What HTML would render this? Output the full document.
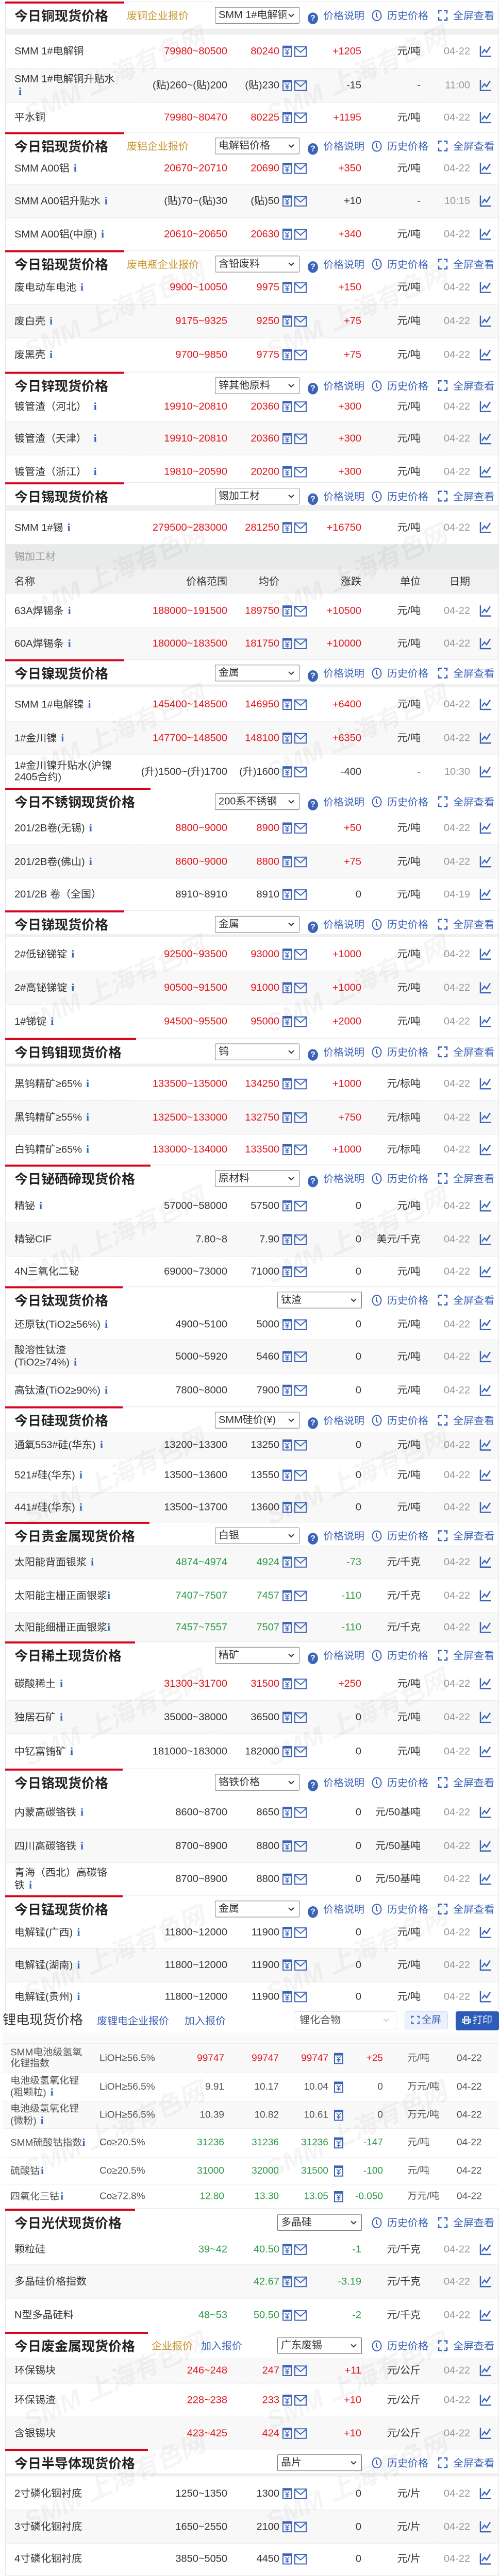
<!DOCTYPE html>
<html><head><meta charset="utf-8">
<style>
*{box-sizing:border-box}
html,body{margin:0;padding:0;background:#fff}
body{font-family:"Liberation Sans","Noto Sans CJK SC",sans-serif;color:#333}
#o{position:relative;width:970px;height:5127px;overflow:hidden}
#w{position:relative;width:970px;height:5127px;overflow:hidden}
.c{position:absolute;left:10px;width:958px;border:1px solid #e6e6e6;background:#fff}
.bar{position:absolute;left:-1px;top:-1px;height:4px;background:#d9001b;z-index:5}
.h{position:absolute;z-index:5;white-space:nowrap}
.tt{left:17px;top:11px;font-size:26px;font-weight:bold;color:#222;line-height:34px}
.sb{top:15px;font-size:20px;color:#c8952c;line-height:26px}
.sb.bl{color:#3b63b8}
.sl{left:406px;top:10px;width:164px;height:33px;border:1px solid #777;border-radius:2px;font-size:20px;line-height:31px;padding-left:6px;background:#fff}
.sl.rt{left:527px}
.sl span{display:block;width:132px;overflow:hidden;white-space:nowrap}
.sl svg{position:absolute;right:8px;top:11px;width:14px;height:10px}
.lk{top:15px;font-size:20px;line-height:26px;color:#3b63b8}
.lk .q{display:inline-block;width:20px;height:23px;border-radius:50%;background:#3b63b8;color:#fff;font-size:16px;font-weight:bold;text-align:center;line-height:23px;margin-right:10px;vertical-align:-3px}
.lk svg{width:20px;height:23px;margin-right:10px;vertical-align:-4px}
.band{position:absolute;left:11px;width:956px;background:#f0f0f0}
.r{position:absolute;left:11px;width:956px;height:67px;font-size:20px;color:#333}
.r.g{background:#f8f8f8}
.r.b{border-top:1px dashed #dcdcdc}
.r>*{position:absolute;top:50%;transform:translateY(-50%);white-space:nowrap;line-height:24px}
.r .n{left:17px;width:196px;white-space:normal;color:#333}
.r .p{right:526px}.r .a{right:425px}
.r .ic{left:537px;width:48px;height:24px}
.r .d{right:266px}.r .u{right:151px}.r .t{right:55px;color:#999}
.r .ch{left:919px;width:24px;height:24px}
.R .p,.R .a,.R .d{color:#e5141b}
.G .p,.G .a,.G .d{color:#2e9b48}
i.i{font-family:"Liberation Serif",serif;font-weight:bold;font-style:normal;color:#3b63b8;font-size:22px;margin-left:8px}
.wm{position:absolute;font-size:50px;font-weight:bold;font-style:italic;color:rgba(0,0,0,0.04);transform:rotate(-25deg);white-space:nowrap;z-index:4;pointer-events:none}
.lr{position:absolute;left:5px;width:963px;font-size:19px;color:#555;border-bottom:1px solid #eee}
.lr.g{background:#f9f9f9}
.lr>*{position:absolute;top:50%;transform:translateY(-50%);white-space:nowrap;line-height:24px}
.lr .n{left:15px;width:150px;white-space:normal}
.lr .s{left:188px}.lr .l{right:533px}.lr .hh{right:427px}.lr .a{right:331px}
.lr .ic{left:643px;width:18px;height:24px}
.lr .d{right:225px}.lr .u{left:785px}.lr .t{left:881px}
.lr.R .l,.lr.R .hh,.lr.R .a,.lr.R .d{color:#e5141b}
.lr.G .l,.lr.G .hh,.lr.G .a,.lr.G .d{color:#2e9b48}
</style></head><body>
<div id="o">
<div id="w">
<svg width="0" height="0" style="position:absolute;left:0;top:0"><defs>
<symbol id="cal" viewBox="0 0 48 24"><rect x="1" y="2" width="16" height="20" fill="none" stroke="#3b63b8" stroke-width="2"/><rect x="1" y="2" width="16" height="4" fill="#3b63b8"/><path d="M5 8l4 4 4-4M9 12v8M5.5 14h7M5.5 17h7" stroke="#3b63b8" stroke-width="1.5" fill="none"/><rect x="24" y="3" width="22" height="19" fill="none" stroke="#3b63b8" stroke-width="2"/><path d="M24 4l11 10 11-10" fill="none" stroke="#3b63b8" stroke-width="2"/></symbol>
<symbol id="c1" viewBox="0 0 18 24"><rect x="1" y="2" width="16" height="20" fill="none" stroke="#3b63b8" stroke-width="2"/><rect x="1" y="2" width="16" height="4" fill="#3b63b8"/><path d="M5 8l4 4 4-4M9 12v8M5.5 14h7M5.5 17h7" stroke="#3b63b8" stroke-width="1.5" fill="none"/></symbol>
<symbol id="ch" viewBox="0 0 24 24"><path d="M2 1v21h21" stroke="#3b63b8" stroke-width="2.5" fill="none"/><path d="M5 16l5-7 4 5 7-11" stroke="#3b63b8" stroke-width="2.5" fill="none"/></symbol>
<symbol id="ck" viewBox="0 0 20 23"><ellipse cx="10" cy="12" rx="8.5" ry="10" fill="none" stroke="#3b63b8" stroke-width="2"/><path d="M9 6v7l3 3" fill="none" stroke="#3b63b8" stroke-width="2"/></symbol>
<symbol id="fs" viewBox="0 0 20 23"><path d="M2 8V2h6M12 2h6v6M18 15v6h-6M8 21H2v-6" fill="none" stroke="#3b63b8" stroke-width="2.5"/></symbol>
<symbol id="cv" viewBox="0 0 14 10"><path d="M2 2l5 5 5-5" fill="none" stroke="#333" stroke-width="2"/></symbol>
</defs></svg>

<!-- COPPER -->
<div class="c" style="top:3px;height:261px"><i class="bar" style="width:231px"></i>
<span class="h tt">今日铜现货价格</span><span class="h sb" style="left:235px">废铜企业报价</span>
<div class="h sl"><span>SMM 1#电解铜</span><svg><use href="#cv"/></svg></div>
<span class="h lk" style="left:586px"><b class="q">?</b>价格说明</span><span class="h lk" style="left:710px"><svg><use href="#ck"/></svg>历史价格</span><span class="h lk" style="left:838px"><svg><use href="#fs"/></svg>全屏查看</span></div>
<div class="band" style="top:57px;height:12px"></div>
<div class="r R" style="top:68px"><span class="n">SMM 1#电解铜</span><span class="p">79980~80500</span><span class="a">80240</span><svg class="ic"><use href="#cal"/></svg><span class="d">+1205</span><span class="u">元/吨</span><span class="t">04-22</span><svg class="ch"><use href="#ch"/></svg></div>
<div class="r g b" style="top:136px"><span class="n">SMM 1#电解铜升贴水 <i class="i">i</i></span><span class="p">(贴)260~(贴)200</span><span class="a">(贴)230</span><svg class="ic"><use href="#cal"/></svg><span class="d">-15</span><span class="u">-</span><span class="t">11:00</span><svg class="ch"><use href="#ch"/></svg></div>
<div class="r R b" style="top:203px;height:60px"><span class="n">平水铜</span><span class="p">79980~80470</span><span class="a">80225</span><svg class="ic"><use href="#cal"/></svg><span class="d">+1195</span><span class="u">元/吨</span><span class="t">04-22</span><svg class="ch"><use href="#ch"/></svg></div>

<!-- ALUMINIUM -->
<div class="c" style="top:263px;height:236px"><i class="bar" style="width:231px"></i>
<span class="h tt">今日铝现货价格</span><span class="h sb" style="left:235px">废铝企业报价</span>
<div class="h sl"><span>电解铝价格</span><svg><use href="#cv"/></svg></div>
<span class="h lk" style="left:586px"><b class="q">?</b>价格说明</span><span class="h lk" style="left:710px"><svg><use href="#ck"/></svg>历史价格</span><span class="h lk" style="left:838px"><svg><use href="#fs"/></svg>全屏查看</span></div>
<div class="r R" style="top:305px;height:60px"><span class="n">SMM A00铝<i class="i">i</i></span><span class="p">20670~20710</span><span class="a">20690</span><svg class="ic"><use href="#cal"/></svg><span class="d">+350</span><span class="u">元/吨</span><span class="t">04-22</span><svg class="ch"><use href="#ch"/></svg></div>
<div class="r g b" style="top:366px"><span class="n">SMM A00铝升贴水<i class="i">i</i></span><span class="p">(贴)70~(贴)30</span><span class="a">(贴)50</span><svg class="ic"><use href="#cal"/></svg><span class="d">+10</span><span class="u">-</span><span class="t">10:15</span><svg class="ch"><use href="#ch"/></svg></div>
<div class="r R b" style="top:433px;height:65px"><span class="n">SMM A00铝(中原)<i class="i">i</i></span><span class="p">20610~20650</span><span class="a">20630</span><svg class="ic"><use href="#cal"/></svg><span class="d">+340</span><span class="u">元/吨</span><span class="t">04-22</span><svg class="ch"><use href="#ch"/></svg></div>

<!-- LEAD -->
<div class="c" style="top:498px;height:243px"><i class="bar" style="width:231px"></i>
<span class="h tt">今日铅现货价格</span><span class="h sb" style="left:235px">废电瓶企业报价</span>
<div class="h sl"><span>含铅废料</span><svg><use href="#cv"/></svg></div>
<span class="h lk" style="left:586px"><b class="q">?</b>价格说明</span><span class="h lk" style="left:710px"><svg><use href="#ck"/></svg>历史价格</span><span class="h lk" style="left:838px"><svg><use href="#fs"/></svg>全屏查看</span></div>
<div class="r R" style="top:538px"><span class="n">废电动车电池<i class="i">i</i></span><span class="p">9900~10050</span><span class="a">9975</span><svg class="ic"><use href="#cal"/></svg><span class="d">+150</span><span class="u">元/吨</span><span class="t">04-22</span><svg class="ch"><use href="#ch"/></svg></div>
<div class="r R g b" style="top:605px"><span class="n">废白壳<i class="i">i</i></span><span class="p">9175~9325</span><span class="a">9250</span><svg class="ic"><use href="#cal"/></svg><span class="d">+75</span><span class="u">元/吨</span><span class="t">04-22</span><svg class="ch"><use href="#ch"/></svg></div>
<div class="r R b" style="top:672px"><span class="n">废黑壳<i class="i">i</i></span><span class="p">9700~9850</span><span class="a">9775</span><svg class="ic"><use href="#cal"/></svg><span class="d">+75</span><span class="u">元/吨</span><span class="t">04-22</span><svg class="ch"><use href="#ch"/></svg></div>

<!-- ZINC -->
<div class="c" style="top:740px;height:221px"><i class="bar" style="width:231px"></i>
<span class="h tt">今日锌现货价格</span>
<div class="h sl"><span>锌其他原料</span><svg><use href="#cv"/></svg></div>
<span class="h lk" style="left:586px"><b class="q">?</b>价格说明</span><span class="h lk" style="left:710px"><svg><use href="#ck"/></svg>历史价格</span><span class="h lk" style="left:838px"><svg><use href="#fs"/></svg>全屏查看</span></div>
<div class="r R" style="top:778px;height:61px"><span class="n">镀管渣（河北） <i class="i">i</i></span><span class="p">19910~20810</span><span class="a">20360</span><svg class="ic"><use href="#cal"/></svg><span class="d">+300</span><span class="u">元/吨</span><span class="t">04-22</span><svg class="ch"><use href="#ch"/></svg></div>
<div class="r R g b" style="top:839px"><span class="n">镀管渣（天津） <i class="i">i</i></span><span class="p">19910~20810</span><span class="a">20360</span><svg class="ic"><use href="#cal"/></svg><span class="d">+300</span><span class="u">元/吨</span><span class="t">04-22</span><svg class="ch"><use href="#ch"/></svg></div>
<div class="r R b" style="top:905px"><span class="n">镀管渣（浙江） <i class="i">i</i></span><span class="p">19810~20590</span><span class="a">20200</span><svg class="ic"><use href="#cal"/></svg><span class="d">+300</span><span class="u">元/吨</span><span class="t">04-22</span><svg class="ch"><use href="#ch"/></svg></div>

<!-- TIN -->
<div class="c" style="top:960px;height:353px"><i class="bar" style="width:231px"></i>
<span class="h tt">今日锡现货价格</span>
<div class="h sl"><span>锡加工材</span><svg><use href="#cv"/></svg></div>
<span class="h lk" style="left:586px"><b class="q">?</b>价格说明</span><span class="h lk" style="left:710px"><svg><use href="#ck"/></svg>历史价格</span><span class="h lk" style="left:838px"><svg><use href="#fs"/></svg>全屏查看</span></div>
<div class="band" style="top:1005px;height:12px"></div>
<div class="r R" style="top:1017px;height:66px"><span class="n">SMM 1#锡<i class="i">i</i></span><span class="p">279500~283000</span><span class="a">281250</span><svg class="ic"><use href="#cal"/></svg><span class="d">+16750</span><span class="u">元/吨</span><span class="t">04-22</span><svg class="ch"><use href="#ch"/></svg></div>
<div class="r" style="top:1083px;height:50px;background:#e9eaea"><span class="n" style="color:#999">锡加工材</span></div>
<div class="r" style="top:1133px;height:49px;background:#f1f1f1"><span class="n">名称</span><span class="p">价格范围</span><span class="a">均价</span><span class="d">涨跌</span><span class="u">单位</span><span class="t" style="color:#333">日期</span></div>
<div class="r R" style="top:1182px"><span class="n">63A焊锡条<i class="i">i</i></span><span class="p">188000~191500</span><span class="a">189750</span><svg class="ic"><use href="#cal"/></svg><span class="d">+10500</span><span class="u">元/吨</span><span class="t">04-22</span><svg class="ch"><use href="#ch"/></svg></div>
<div class="r R g b" style="top:1249px;height:63px"><span class="n">60A焊锡条<i class="i">i</i></span><span class="p">180000~183500</span><span class="a">181750</span><svg class="ic"><use href="#cal"/></svg><span class="d">+10000</span><span class="u">元/吨</span><span class="t">04-22</span><svg class="ch"><use href="#ch"/></svg></div>

<!-- NICKEL -->
<div class="c" style="top:1312px;height:257px"><i class="bar" style="width:231px"></i>
<span class="h tt">今日镍现货价格</span>
<div class="h sl"><span>金属</span><svg><use href="#cv"/></svg></div>
<span class="h lk" style="left:586px"><b class="q">?</b>价格说明</span><span class="h lk" style="left:710px"><svg><use href="#ck"/></svg>历史价格</span><span class="h lk" style="left:838px"><svg><use href="#fs"/></svg>全屏查看</span></div>
<div class="band" style="top:1362px;height:6px"></div>
<div class="r R" style="top:1368px"><span class="n">SMM 1#电解镍<i class="i">i</i></span><span class="p">145400~148500</span><span class="a">146950</span><svg class="ic"><use href="#cal"/></svg><span class="d">+6400</span><span class="u">元/吨</span><span class="t">04-22</span><svg class="ch"><use href="#ch"/></svg></div>
<div class="r R g b" style="top:1435px"><span class="n">1#金川镍<i class="i">i</i></span><span class="p">147700~148500</span><span class="a">148100</span><svg class="ic"><use href="#cal"/></svg><span class="d">+6350</span><span class="u">元/吨</span><span class="t">04-22</span><svg class="ch"><use href="#ch"/></svg></div>
<div class="r b" style="top:1502px;height:66px"><span class="n" style="line-height:23px">1#金川镍升贴水(沪镍2405合约)</span><span class="p">(升)1500~(升)1700</span><span class="a">(升)1600</span><svg class="ic"><use href="#cal"/></svg><span class="d">-400</span><span class="u">-</span><span class="t">10:30</span><svg class="ch"><use href="#ch"/></svg></div>

<!-- STAINLESS -->
<div class="c" style="top:1568px;height:245px"><i class="bar" style="width:282px"></i>
<span class="h tt">今日不锈钢现货价格</span>
<div class="h sl"><span>200系不锈钢</span><svg><use href="#cv"/></svg></div>
<span class="h lk" style="left:586px"><b class="q">?</b>价格说明</span><span class="h lk" style="left:710px"><svg><use href="#ck"/></svg>历史价格</span><span class="h lk" style="left:838px"><svg><use href="#fs"/></svg>全屏查看</span></div>
<div class="r R" style="top:1614px"><span class="n">201/2B卷(无锡)<i class="i">i</i></span><span class="p">8800~9000</span><span class="a">8900</span><svg class="ic"><use href="#cal"/></svg><span class="d">+50</span><span class="u">元/吨</span><span class="t">04-22</span><svg class="ch"><use href="#ch"/></svg></div>
<div class="r R g b" style="top:1681px"><span class="n">201/2B卷(佛山)<i class="i">i</i></span><span class="p">8600~9000</span><span class="a">8800</span><svg class="ic"><use href="#cal"/></svg><span class="d">+75</span><span class="u">元/吨</span><span class="t">04-22</span><svg class="ch"><use href="#ch"/></svg></div>
<div class="r b" style="top:1747px;height:65px"><span class="n">201/2B 卷（全国）</span><span class="p">8910~8910</span><span class="a">8910</span><svg class="ic"><use href="#cal"/></svg><span class="d">0</span><span class="u">元/吨</span><span class="t">04-19</span><svg class="ch"><use href="#ch"/></svg></div>

<!-- ANTIMONY -->
<div class="c" style="top:1812px;height:255px"><i class="bar" style="width:231px"></i>
<span class="h tt">今日锑现货价格</span>
<div class="h sl"><span>金属</span><svg><use href="#cv"/></svg></div>
<span class="h lk" style="left:586px"><b class="q">?</b>价格说明</span><span class="h lk" style="left:710px"><svg><use href="#ck"/></svg>历史价格</span><span class="h lk" style="left:838px"><svg><use href="#fs"/></svg>全屏查看</span></div>
<div class="band" style="top:1859px;height:6px"></div>
<div class="r R" style="top:1865px"><span class="n">2#低铋锑锭<i class="i">i</i></span><span class="p">92500~93500</span><span class="a">93000</span><svg class="ic"><use href="#cal"/></svg><span class="d">+1000</span><span class="u">元/吨</span><span class="t">04-22</span><svg class="ch"><use href="#ch"/></svg></div>
<div class="r R g b" style="top:1932px"><span class="n">2#高铋锑锭<i class="i">i</i></span><span class="p">90500~91500</span><span class="a">91000</span><svg class="ic"><use href="#cal"/></svg><span class="d">+1000</span><span class="u">元/吨</span><span class="t">04-22</span><svg class="ch"><use href="#ch"/></svg></div>
<div class="r R b" style="top:1999px"><span class="n">1#锑锭<i class="i">i</i></span><span class="p">94500~95500</span><span class="a">95000</span><svg class="ic"><use href="#cal"/></svg><span class="d">+2000</span><span class="u">元/吨</span><span class="t">04-22</span><svg class="ch"><use href="#ch"/></svg></div>

<!-- TUNGSTEN -->
<div class="c" style="top:2066px;height:253px"><i class="bar" style="width:254px"></i>
<span class="h tt">今日钨钼现货价格</span>
<div class="h sl"><span>钨</span><svg><use href="#cv"/></svg></div>
<span class="h lk" style="left:586px"><b class="q">?</b>价格说明</span><span class="h lk" style="left:710px"><svg><use href="#ck"/></svg>历史价格</span><span class="h lk" style="left:838px"><svg><use href="#fs"/></svg>全屏查看</span></div>
<div class="band" style="top:2117px;height:6px"></div>
<div class="r R" style="top:2123px"><span class="n">黑钨精矿≥65%<i class="i">i</i></span><span class="p">133500~135000</span><span class="a">134250</span><svg class="ic"><use href="#cal"/></svg><span class="d">+1000</span><span class="u">元/标吨</span><span class="t">04-22</span><svg class="ch"><use href="#ch"/></svg></div>
<div class="r R g b" style="top:2190px"><span class="n">黑钨精矿≥55%<i class="i">i</i></span><span class="p">132500~133000</span><span class="a">132750</span><svg class="ic"><use href="#cal"/></svg><span class="d">+750</span><span class="u">元/标吨</span><span class="t">04-22</span><svg class="ch"><use href="#ch"/></svg></div>
<div class="r R b" style="top:2257px;height:61px"><span class="n">白钨精矿≥65%<i class="i">i</i></span><span class="p">133000~134000</span><span class="a">133500</span><svg class="ic"><use href="#cal"/></svg><span class="d">+1000</span><span class="u">元/标吨</span><span class="t">04-22</span><svg class="ch"><use href="#ch"/></svg></div>

<!-- BiSeTe -->
<div class="c" style="top:2318px;height:243px"><i class="bar" style="width:282px"></i>
<span class="h tt">今日铋硒碲现货价格</span>
<div class="h sl"><span>原材料</span><svg><use href="#cv"/></svg></div>
<span class="h lk" style="left:586px"><b class="q">?</b>价格说明</span><span class="h lk" style="left:710px"><svg><use href="#ck"/></svg>历史价格</span><span class="h lk" style="left:838px"><svg><use href="#fs"/></svg>全屏查看</span></div>
<div class="r" style="top:2366px"><span class="n">精铋<i class="i">i</i></span><span class="p">57000~58000</span><span class="a">57500</span><svg class="ic"><use href="#cal"/></svg><span class="d">0</span><span class="u">元/吨</span><span class="t">04-22</span><svg class="ch"><use href="#ch"/></svg></div>
<div class="r g b" style="top:2433px"><span class="n">精铋CIF</span><span class="p">7.80~8</span><span class="a">7.90</span><svg class="ic"><use href="#cal"/></svg><span class="d">0</span><span class="u">美元/千克</span><span class="t">04-22</span><svg class="ch"><use href="#ch"/></svg></div>
<div class="r b" style="top:2500px;height:60px"><span class="n">4N三氧化二铋</span><span class="p">69000~73000</span><span class="a">71000</span><svg class="ic"><use href="#cal"/></svg><span class="d">0</span><span class="u">元/吨</span><span class="t">04-22</span><svg class="ch"><use href="#ch"/></svg></div>

<!-- TITANIUM -->
<div class="c" style="top:2560px;height:240px"><i class="bar" style="width:228px"></i>
<span class="h tt">今日钛现货价格</span>
<div class="h sl rt"><span>钛渣</span><svg><use href="#cv"/></svg></div>
<span class="h lk" style="left:710px"><svg><use href="#ck"/></svg>历史价格</span><span class="h lk" style="left:838px"><svg><use href="#fs"/></svg>全屏查看</span></div>
<div class="r" style="top:2605px;height:61px"><span class="n">还原钛(TiO2≥56%)<i class="i">i</i></span><span class="p">4900~5100</span><span class="a">5000</span><svg class="ic"><use href="#cal"/></svg><span class="d">0</span><span class="u">元/吨</span><span class="t">04-22</span><svg class="ch"><use href="#ch"/></svg></div>
<div class="r g b" style="top:2666px"><span class="n" style="line-height:23px">酸溶性钛渣(TiO2≥74%)<i class="i">i</i></span><span class="p">5000~5920</span><span class="a">5460</span><svg class="ic"><use href="#cal"/></svg><span class="d">0</span><span class="u">元/吨</span><span class="t">04-22</span><svg class="ch"><use href="#ch"/></svg></div>
<div class="r b" style="top:2733px;height:66px"><span class="n">高钛渣(TiO2≥90%)<i class="i">i</i></span><span class="p">7800~8000</span><span class="a">7900</span><svg class="ic"><use href="#cal"/></svg><span class="d">0</span><span class="u">元/吨</span><span class="t">04-22</span><svg class="ch"><use href="#ch"/></svg></div>

<!-- SILICON -->
<div class="c" style="top:2799px;height:231px"><i class="bar" style="width:228px"></i>
<span class="h tt">今日硅现货价格</span>
<div class="h sl"><span>SMM硅价(¥)</span><svg><use href="#cv"/></svg></div>
<span class="h lk" style="left:586px"><b class="q">?</b>价格说明</span><span class="h lk" style="left:710px"><svg><use href="#ck"/></svg>历史价格</span><span class="h lk" style="left:838px"><svg><use href="#fs"/></svg>全屏查看</span></div>
<div class="r g" style="top:2850px;height:52px"><span class="n">通氧553#硅(华东)<i class="i">i</i></span><span class="p">13200~13300</span><span class="a">13250</span><svg class="ic"><use href="#cal"/></svg><span class="d">0</span><span class="u">元/吨</span><span class="t">04-22</span><svg class="ch"><use href="#ch"/></svg></div>
<div class="r b" style="top:2902px"><span class="n">521#硅(华东)<i class="i">i</i></span><span class="p">13500~13600</span><span class="a">13550</span><svg class="ic"><use href="#cal"/></svg><span class="d">0</span><span class="u">元/吨</span><span class="t">04-22</span><svg class="ch"><use href="#ch"/></svg></div>
<div class="r g b" style="top:2970px;height:59px"><span class="n">441#硅(华东)<i class="i">i</i></span><span class="p">13500~13700</span><span class="a">13600</span><svg class="ic"><use href="#cal"/></svg><span class="d">0</span><span class="u">元/吨</span><span class="t">04-22</span><svg class="ch"><use href="#ch"/></svg></div>

<!-- PRECIOUS -->
<div class="c" style="top:3029px;height:239px"><i class="bar" style="width:280px"></i>
<span class="h tt">今日贵金属现货价格</span>
<div class="h sl"><span>白银</span><svg><use href="#cv"/></svg></div>
<span class="h lk" style="left:586px"><b class="q">?</b>价格说明</span><span class="h lk" style="left:710px"><svg><use href="#ck"/></svg>历史价格</span><span class="h lk" style="left:838px"><svg><use href="#fs"/></svg>全屏查看</span></div>
<div class="r G g" style="top:3075px"><span class="n">太阳能背面银浆<i class="i">i</i></span><span class="p">4874~4974</span><span class="a">4924</span><svg class="ic"><use href="#cal"/></svg><span class="d">-73</span><span class="u">元/千克</span><span class="t">04-22</span><svg class="ch"><use href="#ch"/></svg></div>
<div class="r G b" style="top:3142px"><span class="n" style="line-height:23px">太阳能主栅正面银浆<i class="i" style="margin-left:0">i</i></span><span class="p">7407~7507</span><span class="a">7457</span><svg class="ic"><use href="#cal"/></svg><span class="d">-110</span><span class="u">元/千克</span><span class="t">04-22</span><svg class="ch"><use href="#ch"/></svg></div>
<div class="r G g b" style="top:3209px;height:58px"><span class="n" style="line-height:23px">太阳能细栅正面银浆<i class="i" style="margin-left:0">i</i></span><span class="p">7457~7557</span><span class="a">7507</span><svg class="ic"><use href="#cal"/></svg><span class="d">-110</span><span class="u">元/千克</span><span class="t">04-22</span><svg class="ch"><use href="#ch"/></svg></div>

<!-- RARE EARTH -->
<div class="c" style="top:3267px;height:254px"><i class="bar" style="width:252px"></i>
<span class="h tt">今日稀土现货价格</span>
<div class="h sl"><span>精矿</span><svg><use href="#cv"/></svg></div>
<span class="h lk" style="left:586px"><b class="q">?</b>价格说明</span><span class="h lk" style="left:710px"><svg><use href="#ck"/></svg>历史价格</span><span class="h lk" style="left:838px"><svg><use href="#fs"/></svg>全屏查看</span></div>
<div class="r R" style="top:3317px"><span class="n">碳酸稀土<i class="i">i</i></span><span class="p">31300~31700</span><span class="a">31500</span><svg class="ic"><use href="#cal"/></svg><span class="d">+250</span><span class="u">元/吨</span><span class="t">04-22</span><svg class="ch"><use href="#ch"/></svg></div>
<div class="r g b" style="top:3384px"><span class="n">独居石矿<i class="i">i</i></span><span class="p">35000~38000</span><span class="a">36500</span><svg class="ic"><use href="#cal"/></svg><span class="d">0</span><span class="u">元/吨</span><span class="t">04-22</span><svg class="ch"><use href="#ch"/></svg></div>
<div class="r b" style="top:3450px;height:70px"><span class="n">中钇富铕矿<i class="i">i</i></span><span class="p">181000~183000</span><span class="a">182000</span><svg class="ic"><use href="#cal"/></svg><span class="d">0</span><span class="u">元/吨</span><span class="t">04-22</span><svg class="ch"><use href="#ch"/></svg></div>

<!-- CHROME -->
<div class="c" style="top:3520px;height:253px"><i class="bar" style="width:228px"></i>
<span class="h tt">今日铬现货价格</span>
<div class="h sl"><span>铬铁价格</span><svg><use href="#cv"/></svg></div>
<span class="h lk" style="left:586px"><b class="q">?</b>价格说明</span><span class="h lk" style="left:710px"><svg><use href="#ck"/></svg>历史价格</span><span class="h lk" style="left:838px"><svg><use href="#fs"/></svg>全屏查看</span></div>
<div class="r" style="top:3573px"><span class="n">内蒙高碳铬铁<i class="i">i</i></span><span class="p">8600~8700</span><span class="a">8650</span><svg class="ic"><use href="#cal"/></svg><span class="d">0</span><span class="u">元/50基吨</span><span class="t">04-22</span><svg class="ch"><use href="#ch"/></svg></div>
<div class="r g b" style="top:3640px"><span class="n">四川高碳铬铁<i class="i">i</i></span><span class="p">8700~8900</span><span class="a">8800</span><svg class="ic"><use href="#cal"/></svg><span class="d">0</span><span class="u">元/50基吨</span><span class="t">04-22</span><svg class="ch"><use href="#ch"/></svg></div>
<div class="r b" style="top:3707px;height:65px"><span class="n" style="line-height:24px">青海（西北）高碳铬铁<i class="i">i</i></span><span class="p">8700~8900</span><span class="a">8800</span><svg class="ic"><use href="#cal"/></svg><span class="d">0</span><span class="u">元/50基吨</span><span class="t">04-22</span><svg class="ch"><use href="#ch"/></svg></div>

<!-- MANGANESE -->
<div class="c" style="top:3772px;height:231px"><i class="bar" style="width:228px"></i>
<span class="h tt">今日锰现货价格</span>
<div class="h sl"><span>金属</span><svg><use href="#cv"/></svg></div>
<span class="h lk" style="left:586px"><b class="q">?</b>价格说明</span><span class="h lk" style="left:710px"><svg><use href="#ck"/></svg>历史价格</span><span class="h lk" style="left:838px"><svg><use href="#fs"/></svg>全屏查看</span></div>
<div class="r" style="top:3815px;height:62px"><span class="n">电解锰(广西)<i class="i">i</i></span><span class="p">11800~12000</span><span class="a">11900</span><svg class="ic"><use href="#cal"/></svg><span class="d">0</span><span class="u">元/吨</span><span class="t">04-22</span><svg class="ch"><use href="#ch"/></svg></div>
<div class="r g b" style="top:3877px"><span class="n">电解锰(湖南)<i class="i">i</i></span><span class="p">11800~12000</span><span class="a">11900</span><svg class="ic"><use href="#cal"/></svg><span class="d">0</span><span class="u">元/吨</span><span class="t">04-22</span><svg class="ch"><use href="#ch"/></svg></div>
<div class="r b" style="top:3944px;height:58px"><span class="n">电解锰(贵州)<i class="i">i</i></span><span class="p">11800~12000</span><span class="a">11900</span><svg class="ic"><use href="#cal"/></svg><span class="d">0</span><span class="u">元/吨</span><span class="t">04-22</span><svg class="ch"><use href="#ch"/></svg></div>

<!-- LITHIUM -->
<div style="position:absolute;left:0;top:4002px;width:970px;height:394px;background:#fff"></div>
<div style="position:absolute;left:5px;top:4005px;font-size:26px;line-height:30px;color:#333;white-space:nowrap">锂电现货价格</div>
<div style="position:absolute;left:188px;top:4010px;font-size:20px;line-height:26px;color:#3b63b8;white-space:nowrap">废锂电企业报价</div>
<div style="position:absolute;left:358px;top:4010px;font-size:20px;line-height:26px;color:#3b63b8;white-space:nowrap">加入报价</div>
<div style="position:absolute;left:570px;top:4003px;width:199px;height:36px;border:1px solid #dcdfe6;border-radius:4px;font-size:20px;line-height:34px;padding-left:10px;color:#555">锂化合物<svg style="position:absolute;right:12px;top:12px;width:14px;height:10px" viewBox="0 0 14 10"><path d="M2 2l5 5 5-5" fill="none" stroke="#bbb" stroke-width="1.5"/></svg></div>
<div style="position:absolute;left:785px;top:4003px;width:84px;height:36px;border:1px solid #cfdcf5;border-radius:4px;background:#ecf2fd;color:#3b63b8;font-size:19px;line-height:34px;text-align:center"><svg style="width:16px;height:16px;vertical-align:-2px;margin-right:4px" viewBox="0 0 16 16"><path d="M1 5V1h4M11 1h4v4M15 11v4h-4M5 15H1v-4" fill="none" stroke="#3b63b8" stroke-width="2"/></svg>全屏</div>
<div style="position:absolute;left:884px;top:4003px;width:84px;height:38px;border-radius:4px;background:#2c5cb8;color:#fff;font-size:19px;line-height:38px;text-align:center"><svg style="width:16px;height:16px;vertical-align:-2px;margin-right:4px" viewBox="0 0 16 16"><path d="M4 6V1h8v5M4 12H1V6h14v6h-3M4 9h8v6H4z" fill="none" stroke="#fff" stroke-width="2"/></svg>打印</div>
<div style="position:absolute;left:5px;top:4046px;width:963px;height:22px;background:#fafafa;border-bottom:1px solid #eaeaea"></div>
<div class="lr R g" style="top:4068px;height:58px"><span class="n" style="line-height:22px">SMM电池级氢氧化锂指数</span><span class="s">LiOH≥56.5%</span><span class="l">99747</span><span class="hh">99747</span><span class="a">99747</span><svg class="ic"><use href="#c1"/></svg><span class="d">+25</span><span class="u">元/吨</span><span class="t">04-22</span></div>
<div class="lr" style="top:4126px;height:57px"><span class="n" style="line-height:22px">电池级氢氧化锂(粗颗粒)<i class="i">i</i></span><span class="s">LiOH≥56.5%</span><span class="l">9.91</span><span class="hh">10.17</span><span class="a">10.04</span><svg class="ic"><use href="#c1"/></svg><span class="d">0</span><span class="u">万元/吨</span><span class="t">04-22</span></div>
<div class="lr g" style="top:4183px;height:54px"><span class="n" style="line-height:22px">电池级氢氧化锂(微粉)<i class="i">i</i></span><span class="s">LiOH≥56.5%</span><span class="l">10.39</span><span class="hh">10.82</span><span class="a">10.61</span><svg class="ic"><use href="#c1"/></svg><span class="d">0</span><span class="u">万元/吨</span><span class="t">04-22</span></div>
<div class="lr G" style="top:4237px;height:57px"><span class="n" style="line-height:22px">SMM硫酸钴指数<i class="i" style="margin-left:0">i</i></span><span class="s">Co≥20.5%</span><span class="l">31236</span><span class="hh">31236</span><span class="a">31236</span><svg class="ic"><use href="#c1"/></svg><span class="d">-147</span><span class="u">元/吨</span><span class="t">04-22</span></div>
<div class="lr G" style="top:4294px;height:55px"><span class="n">硫酸钴<i class="i" style="margin-left:2px">i</i></span><span class="s">Co≥20.5%</span><span class="l">31000</span><span class="hh">32000</span><span class="a">31500</span><svg class="ic"><use href="#c1"/></svg><span class="d">-100</span><span class="u">元/吨</span><span class="t">04-22</span></div>
<div class="lr G" style="top:4349px;height:47px"><span class="n">四氧化三钴<i class="i" style="margin-left:2px">i</i></span><span class="s">Co≥72.8%</span><span class="l">12.80</span><span class="hh">13.30</span><span class="a">13.05</span><svg class="ic"><use href="#c1"/></svg><span class="d">-0.050</span><span class="u">万元/吨</span><span class="t">04-22</span></div>

<!-- PV -->
<div class="c" style="top:4396px;height:246px"><i class="bar" style="width:252px"></i>
<span class="h tt">今日光伏现货价格</span>
<div class="h sl rt"><span>多晶硅</span><svg><use href="#cv"/></svg></div>
<span class="h lk" style="left:710px"><svg><use href="#ck"/></svg>历史价格</span><span class="h lk" style="left:838px"><svg><use href="#fs"/></svg>全屏查看</span></div>
<div class="r G" style="top:4446px;height:61px"><span class="n">颗粒硅</span><span class="p">39~42</span><span class="a">40.50</span><svg class="ic"><use href="#cal"/></svg><span class="d">-1</span><span class="u">元/千克</span><span class="t">04-22</span><svg class="ch"><use href="#ch"/></svg></div>
<div class="r G g b" style="top:4507px"><span class="n">多晶硅价格指数</span><span class="a">42.67</span><svg class="ic"><use href="#cal"/></svg><span class="d">-3.19</span><span class="u">元/千克</span><span class="t">04-22</span><svg class="ch"><use href="#ch"/></svg></div>
<div class="r G b" style="top:4574px;height:67px"><span class="n">N型多晶硅料</span><span class="p">48~53</span><span class="a">50.50</span><svg class="ic"><use href="#cal"/></svg><span class="d">-2</span><span class="u">元/千克</span><span class="t">04-22</span><svg class="ch"><use href="#ch"/></svg></div>

<!-- SCRAP -->
<div class="c" style="top:4641px;height:234px"><i class="bar" style="width:277px"></i>
<span class="h tt">今日废金属现货价格</span><span class="h sb" style="left:283px">企业报价</span><span class="h sb bl" style="left:379px">加入报价</span>
<div class="h sl rt"><span>广东废锡</span><svg><use href="#cv"/></svg></div>
<span class="h lk" style="left:710px"><svg><use href="#ck"/></svg>历史价格</span><span class="h lk" style="left:838px"><svg><use href="#fs"/></svg>全屏查看</span></div>
<div class="r R g" style="top:4693px;height:50px"><span class="n">环保锡块</span><span class="p">246~248</span><span class="a">247</span><svg class="ic"><use href="#cal"/></svg><span class="d">+11</span><span class="u">元/公斤</span><span class="t">04-22</span><svg class="ch"><use href="#ch"/></svg></div>
<div class="r R b" style="top:4743px"><span class="n">环保锡渣</span><span class="p">228~238</span><span class="a">233</span><svg class="ic"><use href="#cal"/></svg><span class="d">+10</span><span class="u">元/公斤</span><span class="t">04-22</span><svg class="ch"><use href="#ch"/></svg></div>
<div class="r R g b" style="top:4810px;height:64px"><span class="n">含银锡块</span><span class="p">423~425</span><span class="a">424</span><svg class="ic"><use href="#cal"/></svg><span class="d">+10</span><span class="u">元/公斤</span><span class="t">04-22</span><svg class="ch"><use href="#ch"/></svg></div>

<!-- SEMI -->
<div class="c" style="top:4874px;height:253px"><i class="bar" style="width:277px"></i>
<span class="h tt">今日半导体现货价格</span>
<div class="h sl rt"><span>晶片</span><svg><use href="#cv"/></svg></div>
<span class="h lk" style="left:710px"><svg><use href="#ck"/></svg>历史价格</span><span class="h lk" style="left:838px"><svg><use href="#fs"/></svg>全屏查看</span></div>
<div class="band" style="top:4922px;height:7px"></div>
<div class="r" style="top:4929px"><span class="n">2寸磷化铟衬底</span><span class="p">1250~1350</span><span class="a">1300</span><svg class="ic"><use href="#cal"/></svg><span class="d">0</span><span class="u">元/片</span><span class="t">04-22</span><svg class="ch"><use href="#ch"/></svg></div>
<div class="r g b" style="top:4995px"><span class="n">3寸磷化铟衬底</span><span class="p">1650~2550</span><span class="a">2100</span><svg class="ic"><use href="#cal"/></svg><span class="d">0</span><span class="u">元/片</span><span class="t">04-22</span><svg class="ch"><use href="#ch"/></svg></div>
<div class="r b" style="top:5062px;height:60px"><span class="n">4寸磷化铟衬底</span><span class="p">3850~5050</span><span class="a">4450</span><svg class="ic"><use href="#cal"/></svg><span class="d">0</span><span class="u">元/片</span><span class="t">04-22</span><svg class="ch"><use href="#ch"/></svg></div>

<!-- watermarks -->
<span class="wm" style="left:30px;top:110px">SMM 上海有色网</span><span class="wm" style="left:500px;top:110px">SMM 上海有色网</span>
<span class="wm" style="left:30px;top:580px">SMM 上海有色网</span><span class="wm" style="left:500px;top:580px">SMM 上海有色网</span>
<span class="wm" style="left:30px;top:1100px">SMM 上海有色网</span><span class="wm" style="left:500px;top:1100px">SMM 上海有色网</span>
<span class="wm" style="left:30px;top:1420px">SMM 上海有色网</span><span class="wm" style="left:500px;top:1420px">SMM 上海有色网</span>
<span class="wm" style="left:30px;top:1920px">SMM 上海有色网</span><span class="wm" style="left:500px;top:1920px">SMM 上海有色网</span>
<span class="wm" style="left:30px;top:2420px">SMM 上海有色网</span><span class="wm" style="left:500px;top:2420px">SMM 上海有色网</span>
<span class="wm" style="left:30px;top:2900px">SMM 上海有色网</span><span class="wm" style="left:500px;top:2900px">SMM 上海有色网</span>
<span class="wm" style="left:30px;top:3380px">SMM 上海有色网</span><span class="wm" style="left:500px;top:3380px">SMM 上海有色网</span>
<span class="wm" style="left:30px;top:3850px">SMM 上海有色网</span><span class="wm" style="left:500px;top:3850px">SMM 上海有色网</span>
<span class="wm" style="left:30px;top:4200px">SMM 上海有色网</span><span class="wm" style="left:500px;top:4200px">SMM 上海有色网</span>
<span class="wm" style="left:30px;top:4700px">SMM 上海有色网</span><span class="wm" style="left:500px;top:4700px">SMM 上海有色网</span>
<span class="wm" style="left:30px;top:4900px">SMM 上海有色网</span><span class="wm" style="left:500px;top:4900px">SMM 上海有色网</span>
</div>
</div>
<script>
(function(){
  var h=window.innerHeight||document.documentElement.clientHeight;
  if(h&&h>3000&&h<5120){
    var w=document.getElementById('w');
    w.style.transformOrigin='0 0';
    w.style.transform='scaleY('+(h/5127)+')';
    var o=document.getElementById('o');
    o.style.height=h+'px';
  }
})();
</script>
</body></html>
